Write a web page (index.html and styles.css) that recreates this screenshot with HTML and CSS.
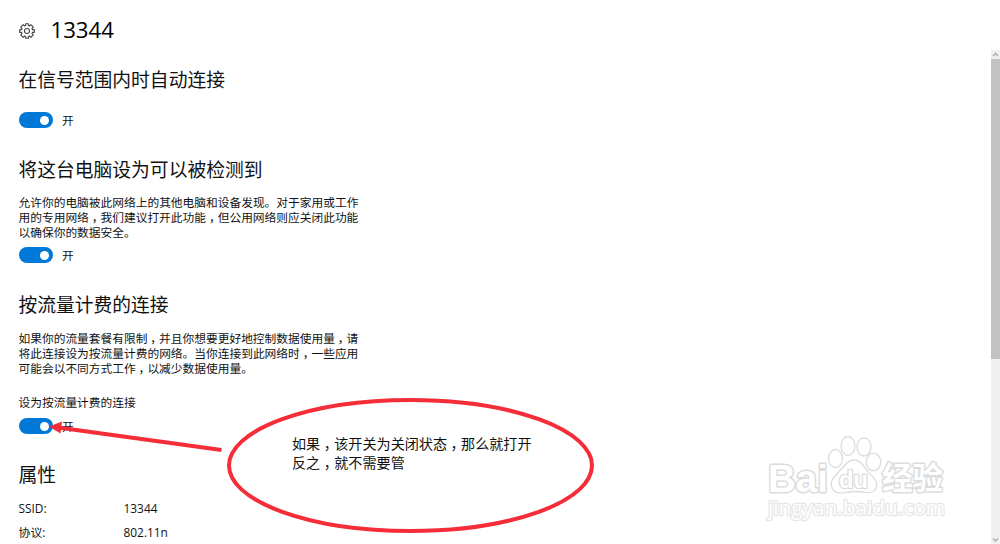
FILE: index.html
```html
<!DOCTYPE html>
<html lang="zh-CN">
<head>
<meta charset="utf-8">
<title>13344</title>
<link rel="stylesheet" href="styles.css">
</head>
<body>
<div class="window">
  <main class="settings">
    <header class="title-bar">
      <svg class="gear" viewBox="0 0 16 16"><path d="M6.7 2.500 6.600.7h2.800L9.300 2.500l1.200.5L11.800 1.700 14.300 4.200 13 5.500l.5 1.200 1.800-.1v2.800l-1.800-.1-.5 1.200 1.300 1.300-2.500 2.500-1.300-1.300-1.200.5.1 1.800H6.600l.1-1.800-1.200-.5-1.300 1.300-2.500-2.500L3 10.500l-.5-1.200-1.800.1V6.600l1.800.1L3 5.500 1.700 4.200l2.500-2.500L5.500 3z"/><circle cx="8" cy="8" r="2.500"/></svg>
      <h1>13344</h1>
    </header>
    <section class="auto">
      <h2>在信号范围内时自动连接</h2>
      <div class="toggle-row"><span class="toggle"></span><span>开</span></div>
    </section>
    <section class="discover">
      <h2>将这台电脑设为可以被检测到</h2>
      <p>允许你的电脑被此网络上的其他电脑和设备发现。对于家用或工作<br>用的专用网络<i>，</i>我们建议打开此功能<i>，</i>但公用网络则应关闭此功能<br>以确保你的数据安全。</p>
      <div class="toggle-row"><span class="toggle"></span><span>开</span></div>
    </section>
    <section class="metered">
      <h2>按流量计费的连接</h2>
      <p>如果你的流量套餐有限制<i>，</i>并且你想要更好地控制数据使用量<i>，</i>请<br>将此连接设为按流量计费的网络。当你连接到此网络时<i>，</i>一些应用<br>可能会以不同方式工作<i>，</i>以减少数据使用量。</p>
      <div class="label">设为按流量计费的连接</div>
      <div class="toggle-row"><span class="toggle"></span><span>开</span></div>
    </section>
    <section class="properties">
      <h2>属性</h2>
      <dl>
        <dt>SSID:</dt><dd>13344</dd>
        <dt>协议:</dt><dd>802.11n</dd>
      </dl>
    </section>
  </main>
  <aside class="scrollbar">
    <svg class="chevron" viewBox="0 0 9 8"><path d="M2 5.500 4.500 3 7 5.500"/></svg>
    <div class="thumb"></div>
    <svg class="chevron bottom" viewBox="0 0 9 8"><path d="M2 3 4.500 5.500 7 3"/></svg>
  </aside>
  <svg class="annotation" viewBox="0 0 1000 544">
    <ellipse cx="410.500" cy="465.500" rx="181.500" ry="65.500"/>
    <path class="shaft" d="M58 427.500 221.500 450"/>
    <path class="head" d="M49 426.500 62 421.500 60.500 433.500z"/>
  </svg>
  <div class="note">如果<i>，</i>该开关为关闭状态<i>，</i>那么就打开<br>反之<i>，</i>就不需要管</div>
  <svg class="watermark" viewBox="0 0 190 94">
    <text class="brand" x="8" y="61.500" font-size="38" textLength="60" lengthAdjust="spacingAndGlyphs">Bai</text>
    <ellipse cx="75.500" cy="28.500" rx="7" ry="9"/>
    <ellipse cx="88" cy="16" rx="7" ry="9.500"/>
    <ellipse cx="104" cy="17" rx="7" ry="9"/>
    <ellipse cx="113.500" cy="32" rx="7.200" ry="8.800"/>
    <path d="M73 60Q68 52 76 45L85 35Q94 25 103 35L108 42Q113 46 116 51C119 61 111 64 104 62Q95 61 87 62Q78 65 73 60z"/>
    <text class="du" x="79" y="57.500" font-size="23" textLength="29" lengthAdjust="spacingAndGlyphs">du</text>
    <text class="cjk" x="122" y="59" font-size="30.500" textLength="61">经验</text>
    <text class="site" x="8" y="85" font-size="20" textLength="177" lengthAdjust="spacingAndGlyphs">jingyan.baidu.com</text>
  </svg>
</div>
</body>
</html>
```
FILE: styles.css
```css
* { box-sizing: border-box; }
body {
  margin: 0;
  background: #fff;
  color: #111;
  font: 11.73px/15px "Open Sans", "Noto Sans CJK SC", sans-serif;
}
/* half-width comma centred in a full-width cell */
i { font-style: normal; font-feature-settings: "halt"; padding: 0 .25em; }
.window { position: relative; width: 1000px; height: 544px; overflow: hidden; display: flex; justify-content: space-between; }
.settings { width: 400px; padding: 15px 0 0 18.5px; white-space: nowrap; }
.title-bar { display: flex; align-items: center; gap: 16px; height: 31px; }
.gear { width: 16px; height: 16px; fill: none; stroke: #444; stroke-width: 1.1; stroke-linejoin: round; }
h1, h2, p, dl, dd { margin: 0; font-weight: 400; }
h1 { font-size: 22.2px; line-height: 28px; padding-bottom: 2px; color: #000; }
h2 { font-size: 18.78px; line-height: 28px; }
.auto { margin-top: 20px; }
.auto .toggle-row { margin-top: 18px; }
.discover { margin-top: 28px; }
.discover p { margin-top: 11px; }
.discover .toggle-row { margin-top: 7px; }
.metered { margin-top: 28px; }
.metered p { margin-top: 12px; }
.label { margin-top: 19px; }
.metered .toggle-row { margin-top: 8px; }
.toggle-row { display: flex; align-items: center; gap: 9px; height: 16px; }
.toggle { width: 34.5px; height: 16px; border-radius: 8px; background: #0078d7; display: flex; align-items: center; justify-content: flex-end; padding-right: 4px; }
.toggle::after { content: ""; width: 9px; height: 9px; border-radius: 50%; background: #fff; }
.properties { margin-top: 27px; }
dl { display: grid; grid-template-columns: 105px 1fr; row-gap: 9px; margin-top: 12px; font-size: 11.9px; }
.scrollbar { width: 9px; margin-top: 50px; background: #f0f0f0; display: flex; flex-direction: column; }
.chevron { width: 9px; height: 9px; fill: none; stroke: #aaa; stroke-width: 1.3; }
.chevron.bottom { margin-top: auto; }
.thumb { height: 300px; background: #c2c2c2; }
.annotation { position: absolute; inset: 0; width: 1000px; height: 544px; fill: none; stroke: #f52d38; stroke-width: 4; }
.annotation .head { fill: #f52d38; stroke: none; }
.note { position: absolute; left: 292px; top: 434px; font-size: 14.1px; line-height: 19px; white-space: nowrap; }
.watermark { position: absolute; left: 760px; top: 430px; width: 190px; height: 94px; fill: #fff; stroke: #dcdcdc; stroke-width: 1.3; stroke-linejoin: round; }
.watermark text { stroke-width: 3; paint-order: stroke; }
.brand, .du { font-family: "Liberation Sans", sans-serif; font-weight: 700; }
.cjk { font-family: "Noto Sans CJK SC", sans-serif; font-weight: 700; }
.watermark .du { stroke-width: 2.5; }
.watermark .site { font-family: "Open Sans", sans-serif; stroke: #e6e6e6; stroke-width: 2.4; }
```
